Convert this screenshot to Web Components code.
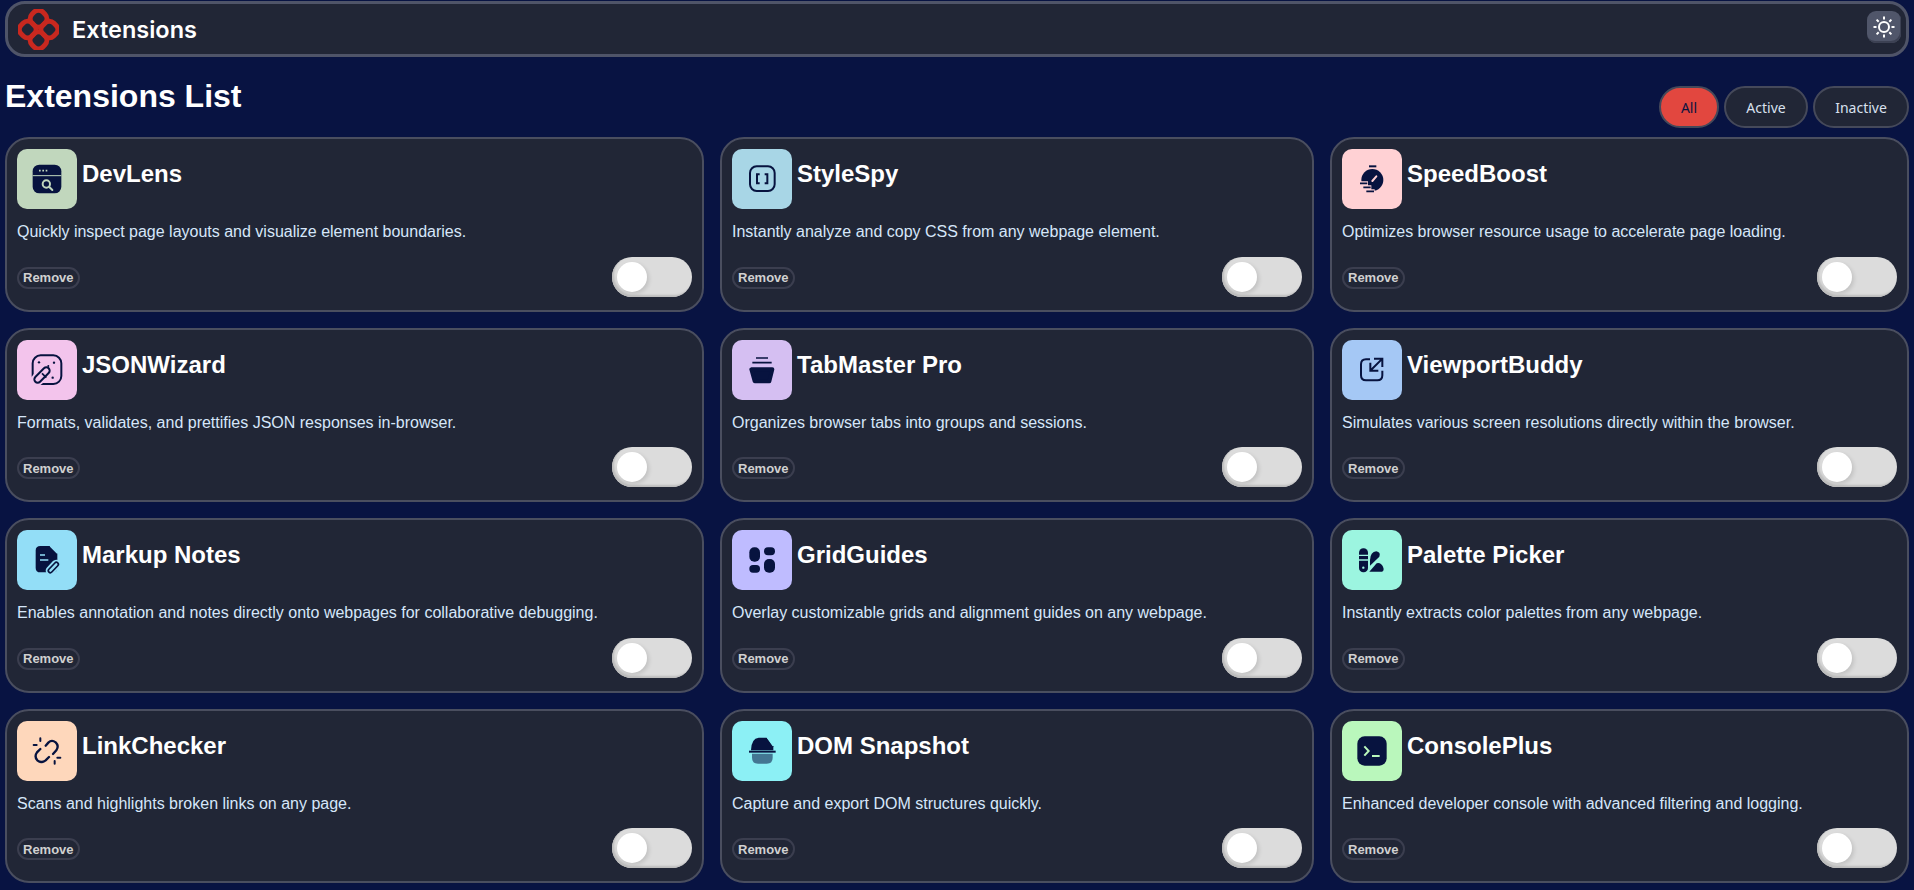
<!DOCTYPE html>
<html lang="en">
<head>
<meta charset="utf-8">
<title>Extensions</title>
<style>
  html, body { margin: 0; background: #081342; }
  body { padding: 1px 5px 0; font-family: "Liberation Sans", Arial, sans-serif; color: #fff; }
</style>
</head>
<body>
<app-header title-text="Extensions"></app-header>
<list-toolbar heading="Extensions List"></list-toolbar>
<extension-grid id="grid"></extension-grid>

<script>
// Icons are drawn on the 60px tile at 3x, so the coordinates are in a 180 box.
const TILE = "var(--tile)";
const ICONS = {
  devlens: `<rect x="47" y="47" width="86" height="86" rx="20" fill="#07133f"/>
    <path d="M47 80H133" stroke="${TILE}" stroke-width="3"/>
    <path d="M66 65H71M76 65H81M86 65H91" stroke="${TILE}" stroke-width="5"/>
    <circle cx="88" cy="105" r="11" fill="none" stroke="${TILE}" stroke-width="6"/>
    <path d="M97 114L106 123" stroke="${TILE}" stroke-width="6" stroke-linecap="round"/>`,
  stylespy: `<rect x="54" y="52" width="74" height="74" rx="20" fill="none" stroke="#07133f" stroke-width="6"/>
    <path d="M83 76H75V103H83M98 76H106V103H98" fill="none" stroke="#07133f" stroke-width="6"/>`,
  speedboost: `<path d="M81 52H103" stroke="#07133f" stroke-width="6"/>
    <circle cx="91" cy="93" r="33" fill="#07133f"/>
    <path d="M50 103H78M60 115H88M69 127H98" stroke="${TILE}" stroke-width="13"/>
    <path d="M54 103H76M64 115H86M73 127H96" stroke="#07133f" stroke-width="5"/>
    <path d="M91 96L103 82" stroke="${TILE}" stroke-width="6" stroke-linecap="round"/>`,
  jsonwizard: `<rect x="47" y="46" width="86" height="86" rx="24" fill="none" stroke="#07133f" stroke-width="6"/>
    <path d="M62 118L88 92" stroke="${TILE}" stroke-width="38" stroke-linecap="round"/>
    <path d="M62 118L88 92" stroke="#07133f" stroke-width="26" stroke-linecap="round"/>
    <path d="M62 118L88 92" stroke="${TILE}" stroke-width="14" stroke-linecap="round"/>
    <path d="M75 100L88 113" stroke="#07133f" stroke-width="5"/>
    <circle cx="66" cy="67" r="3.5" fill="#07133f"/><circle cx="111" cy="68" r="3.5" fill="#07133f"/>
    <circle cx="94" cy="78" r="3" fill="#07133f"/><circle cx="107" cy="113" r="3.5" fill="#07133f"/>`,
  tabmaster: `<path d="M72 54H108M61 68H119" stroke="#07133f" stroke-width="5"/>
    <path d="M58 88H121L112 124H68Z" fill="#07133f" stroke="#07133f" stroke-width="12" stroke-linejoin="round"/>`,
  viewport: `<path d="M84 58H72Q57 58 57 73V106Q57 121 72 121H106Q121 121 121 106V92" fill="none" stroke="#07133f" stroke-width="6"/>
    <path d="M87 90L119 58M96 56H121V81M85 68V92H109" fill="none" stroke="#07133f" stroke-width="6"/>`,
  markup: `<path d="M70 48H98L121 71V113Q121 127 107 127H70Q56 127 56 113V62Q56 48 70 48Z" fill="#07133f"/>
    <path d="M100 48L121 69" stroke="${TILE}" stroke-width="5"/>
    <path d="M69 75H84M69 90H94" stroke="${TILE}" stroke-width="5"/>
    <path d="M100 122L118 103" stroke="${TILE}" stroke-width="28" stroke-linecap="round"/>
    <path d="M100 122L118 103" stroke="#07133f" stroke-width="17" stroke-linecap="round"/>
    <path d="M100 122L118 103" stroke="${TILE}" stroke-width="7" stroke-linecap="round"/>`,
  grid: `<rect x="52" y="52" width="32" height="43" rx="15" fill="#07133f"/>
    <rect x="96" y="52" width="33" height="24" rx="12" fill="#07133f"/>
    <rect x="52" y="105" width="32" height="23" rx="11" fill="#07133f"/>
    <rect x="96" y="87" width="33" height="41" rx="15" fill="#07133f"/>`,
  palette: `<rect x="51" y="55" width="27" height="72" rx="13" fill="#07133f"/>
    <path d="M51 76H78M51 90H78" stroke="${TILE}" stroke-width="4"/>
    <circle cx="64" cy="113" r="3.5" fill="${TILE}"/>
    <path d="M84 107V90Q85 66 103 64Q117 67 112 80Z" fill="#07133f"/>
    <path d="M82 125L104 100Q115 95 123 110Q128 122 120 125Z" fill="#07133f"/>`,
  linkchecker: `<path d="M86 74L94 65Q104 55 116 64Q127 75 118 88L108 99" fill="none" stroke="#07133f" stroke-width="7" stroke-linecap="round"/>
    <path d="M96 108L86 118Q73 128 61 118Q51 106 60 94L70 84" fill="none" stroke="#07133f" stroke-width="7" stroke-linecap="round"/>
    <path d="M70 52V60M50 72H59M113 120V128M121 110H130" stroke="#07133f" stroke-width="6" stroke-linecap="round"/>`,
  domsnapshot: `<path d="M57 88Q58 52 80 50H104L124 76V88Z" fill="#07133f"/>
    <path d="M106 48L124 74" stroke="${TILE}" stroke-width="5"/>
    <path d="M51 92H131" stroke="#07133f" stroke-width="6"/>
    <path d="M60 98H122V110Q122 128 104 128H78Q60 128 60 110Z" fill="#07133f" opacity=".55"/>`,
  console: `<rect x="46" y="46" width="88" height="88" rx="22" fill="#07133f"/>
    <path d="M67 76L80 90L67 104" fill="none" stroke="${TILE}" stroke-width="6"/>
    <path d="M90 105H113" stroke="${TILE}" stroke-width="6"/>`,
};

class AppHeader extends HTMLElement {
  constructor() {
    super();
    this.attachShadow({ mode: "open" }).innerHTML = `
      <style>
        :host { display: flex; align-items: center; box-sizing: border-box; height: 56px; padding: 0 5px 0 10px;
          background: #212636; border: 3px solid #4f5468; border-radius: 20px; }
        svg.logo { width: 41px; height: 41px; flex: none; }
        span { margin-left: 13px; font: 600 23.5px Inter, "Noto Sans", sans-serif; color: #fff; flex: 1; }
        button { width: 34px; height: 32px; margin-top: -5px; padding: 0; border: 0; border-radius: 9px; background: #50566a;
          box-shadow: inset -1px -2px 0 #3c4153; display: grid; place-items: center; }
        button svg { width: 22px; height: 22px; }
      </style>
      <svg class="logo" viewBox="0 0 40 40" fill="none" stroke="#c9281f" stroke-width="4.8" stroke-linejoin="round">
        <g transform="rotate(45 20 20)">
          <rect x="5" y="5" width="15" height="15" rx="6"/>
          <rect x="20" y="5" width="15" height="15" rx="6"/>
          <rect x="5" y="20" width="15" height="15" rx="6"/>
          <rect x="20" y="20" width="15" height="15" rx="6"/>
        </g>
      </svg>
      <span></span>
      <button type="button" aria-label="Toggle theme">
        <svg viewBox="0 0 22 22" fill="none" stroke="#fff" stroke-width="2">
          <circle cx="11" cy="11" r="5"/>
          <path d="M11 0.5V3.5M11 18.5V21.5M0.5 11H3.5M18.5 11H21.5M3.6 3.6L5.7 5.7M16.3 16.3L18.4 18.4M3.6 18.4L5.7 16.3M16.3 5.7L18.4 3.6"/>
        </svg>
      </button>`;
    this.shadowRoot.querySelector("span").textContent = this.getAttribute("title-text");
  }
}

class ListToolbar extends HTMLElement {
  constructor() {
    super();
    this.attachShadow({ mode: "open" }).innerHTML = `
      <style>
        :host { display: flex; justify-content: space-between; box-sizing: border-box; height: 80px; }
        h1 { margin: 21px 0 0; font: bold 32px/37px "Liberation Sans", Arial, sans-serif; color: #fff; }
        div { display: flex; gap: 5px; padding-top: 29px; }
        button { box-sizing: border-box; height: 42px; border: 2px solid #45495a; border-radius: 21px; background: #212636;
          color: #d8e0ee; font: 14px "Noto Sans", sans-serif; padding: 0; }
        button.on { background: #e2473f; color: #0a1440; }
      </style>
      <h1></h1>
      <div>
        <button type="button" class="on" style="width:60px">All</button>
        <button type="button" style="width:84px">Active</button>
        <button type="button" style="width:96px">Inactive</button>
      </div>`;
    this.shadowRoot.querySelector("h1").textContent = this.getAttribute("heading");
  }
}

class ExtensionGrid extends HTMLElement {
  constructor() {
    super();
    this.attachShadow({ mode: "open" }).innerHTML = `
      <style>
        :host { display: grid; grid-template-columns: 699fr 594fr 579fr; grid-auto-rows: 174.5px; gap: 16px; }
      </style>
      <slot></slot>`;
  }
}

class ToggleSwitch extends HTMLElement {
  constructor() {
    super();
    this.attachShadow({ mode: "open" }).innerHTML = `
      <style>
        :host { display: block; box-sizing: border-box; width: 80px; height: 40px; padding: 5px; border-radius: 20px;
          background: #dcdcdc; box-shadow: inset 2px -2px 2px #bcbcbc; }
        i { display: block; width: 30px; height: 30px; border-radius: 50%; background: #fff; box-shadow: 2px 2px 4px rgb(0 0 0 / .12); }
      </style>
      <i></i>`;
  }
}

class ExtensionCard extends HTMLElement {
  constructor() {
    super();
    this.attachShadow({ mode: "open" }).innerHTML = `
      <style>
        :host { display: flex; flex-direction: column; box-sizing: border-box; padding: 10px 10px 13px;
          background: #212636; border: 2px solid #4a4e5f; border-radius: 24px; min-width: 0; }
        header { display: flex; gap: 5px; height: 60px; }
        .tile { width: 60px; height: 60px; flex: none; border-radius: 10px; background: var(--tile); }
        .tile svg { display: block; width: 60px; height: 60px; }
        h2 { margin: 11px 0 0; font: bold 24px/28px "Liberation Sans", Arial, sans-serif; color: #fff; }
        p { margin: 14px 0 0; font: 16px/18px "Liberation Sans", Arial, sans-serif; color: #d6e6fa; }
        footer { display: flex; justify-content: space-between; align-items: center; margin-top: auto; }
        button { box-sizing: border-box; height: 22px; margin-top: 2px; padding: 0 4px; border: 2px solid #3b3e4f; border-radius: 11px;
          background: transparent; color: #d0d0d0; font: bold 13px "Liberation Sans", Arial, sans-serif; }
      </style>
      <header><div class="tile"></div><h2></h2></header>
      <p></p>
      <footer><button type="button">Remove</button><toggle-switch></toggle-switch></footer>`;
  }

  // Attributes are set after createElement, so read them once attached.
  connectedCallback() {
    const root = this.shadowRoot;
    const tile = root.querySelector(".tile");
    root.querySelector("h2").textContent = this.getAttribute("name");
    root.querySelector("p").textContent = this.getAttribute("description");
    tile.style.setProperty("--tile", this.getAttribute("tile"));
    tile.innerHTML = `<svg viewBox="0 0 180 180">${ICONS[this.getAttribute("icon")]}</svg>`;
  }
}

customElements.define("app-header", AppHeader);
customElements.define("list-toolbar", ListToolbar);
customElements.define("extension-grid", ExtensionGrid);
customElements.define("toggle-switch", ToggleSwitch);
customElements.define("extension-card", ExtensionCard);

const EXTENSIONS = [
  ["DevLens", "Quickly inspect page layouts and visualize element boundaries.", "devlens", "#c1d7bd"],
  ["StyleSpy", "Instantly analyze and copy CSS from any webpage element.", "stylespy", "#a8d6e6"],
  ["SpeedBoost", "Optimizes browser resource usage to accelerate page loading.", "speedboost", "#ffd1d4"],
  ["JSONWizard", "Formats, validates, and prettifies JSON responses in-browser.", "jsonwizard", "#f3c4ec"],
  ["TabMaster Pro", "Organizes browser tabs into groups and sessions.", "tabmaster", "#d5bff2"],
  ["ViewportBuddy", "Simulates various screen resolutions directly within the browser.", "viewport", "#a5c8f5"],
  ["Markup Notes", "Enables annotation and notes directly onto webpages for collaborative debugging.", "markup", "#93def7"],
  ["GridGuides", "Overlay customizable grids and alignment guides on any webpage.", "grid", "#bfbcff"],
  ["Palette Picker", "Instantly extracts color palettes from any webpage.", "palette", "#9cf5e0"],
  ["LinkChecker", "Scans and highlights broken links on any page.", "linkchecker", "#fed7bb"],
  ["DOM Snapshot", "Capture and export DOM structures quickly.", "domsnapshot", "#8cf0f5"],
  ["ConsolePlus", "Enhanced developer console with advanced filtering and logging.", "console", "#baf7bc"],
];

const grid = document.getElementById("grid");
for (const [name, description, icon, tile] of EXTENSIONS) {
  const card = document.createElement("extension-card");
  card.setAttribute("name", name);
  card.setAttribute("description", description);
  card.setAttribute("icon", icon);
  card.setAttribute("tile", tile);
  grid.appendChild(card);
}
</script>
</body>
</html>
